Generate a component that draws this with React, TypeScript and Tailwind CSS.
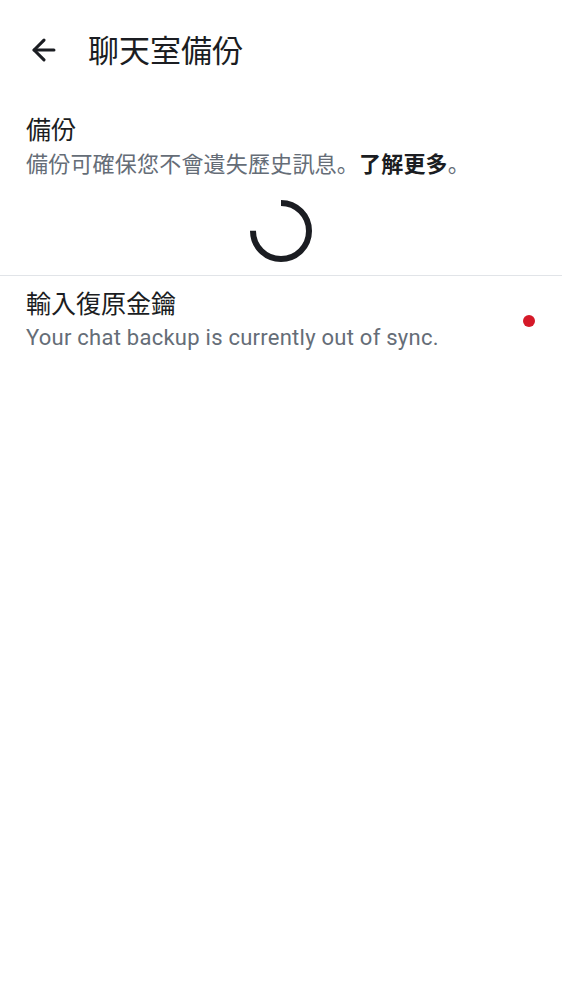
import { ArrowLeft } from 'lucide-react'

const font = { fontFamily: '"Roboto", "Noto Sans CJK JP", sans-serif' }

function Spinner() {
  return (
    <svg width="62" height="62" viewBox="0 0 62 62" className="-rotate-90">
      <circle
        cx="31"
        cy="31"
        r="28"
        fill="none"
        stroke="#1b1d22"
        strokeWidth="6"
        strokeDasharray="131.9 200"
      />
    </svg>
  )
}

export default function App() {
  return (
    <div className="w-[562px] min-h-[1000px] bg-white text-[#1b1d22]" style={font}>
      <header className="h-[100px] flex items-center pl-[6px]">
        <button className="w-[75px] h-[75px] flex items-center justify-center">
          <ArrowLeft size={34} strokeWidth={2.2} color="#1b1d22" />
        </button>
        <h1 className="ml-[7px] pt-[4px] text-[31px] leading-[40px]">聊天室備份</h1>
      </header>

      <section className="px-[26px] pt-[13px]">
        <div className="text-[25px] leading-[36px]">備份</div>
        <p className="text-[22px] leading-[31px] text-[#656d77] tracking-[0.2px]">
          備份可確保您不會遺失歷史訊息。<span className="font-bold text-[#1b1d22]">了解更多</span>。
        </p>
        <div className="flex justify-center pt-[20px] pb-[13px]">
          <Spinner />
        </div>
      </section>

      <div className="h-px bg-[#e1e4e8]" />

      <div className="flex items-center pl-[26px] pr-[27px] pt-[12px] pb-[8px]">
        <div className="flex-1">
          <div className="text-[25px] leading-[34px]">輸入復原金鑰</div>
          <div className="text-[22px] leading-[31px] text-[#656d77] tracking-[0.25px]">
            Your chat backup is currently out of sync.
          </div>
        </div>
        <span className="w-[12px] h-[12px] rounded-full bg-[#d51928]" />
      </div>
    </div>
  )
}
